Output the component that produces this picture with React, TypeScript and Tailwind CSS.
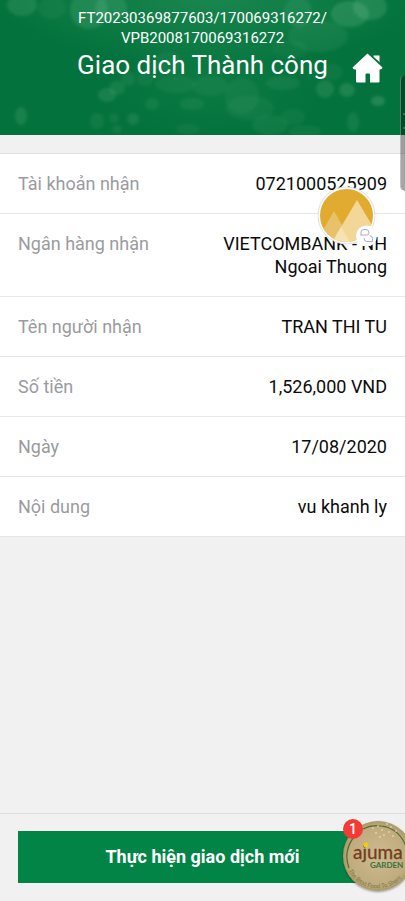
const details = [
  { label: 'Tài khoản nhận', value: '0721000525909' },
  { label: 'Ngân hàng nhận', value: 'VIETCOMBANK - NH Ngoai Thuong' },
  { label: 'Tên người nhận', value: 'TRAN THI TU' },
  { label: 'Số tiền', value: '1,526,000 VND' },
  { label: 'Ngày', value: '17/08/2020' },
  { label: 'Nội dung', value: 'vu khanh ly' },
];

// cx, cy, rx, ry, opacity
const bokeh = [
  [22, 5, 15, 11, 0.13],
  [52, 8, 14, 11, 0.06],
  [89, 10, 19, 19, 0.13],
  [111, 8, 16, 13, 0.12],
  [298, 12, 14, 15, 0.09],
  [350, 14, 19, 13, 0.16],
  [370, 7, 17, 13, 0.15],
  [318, 36, 30, 16, 0.07],
  [290, 49, 18, 9, 0.04],
  [168, 63, 14, 11, 0.06],
  [128, 79, 7, 7, 0.08],
  [117, 88, 8, 7, 0.1],
  [107, 95, 9, 7, 0.12],
  [145, 79, 8, 7, 0.06],
  [175, 84, 20, 9, 0.05],
  [210, 86, 18, 10, 0.05],
  [242, 96, 17, 18, 0.06],
  [283, 83, 17, 7, 0.07],
  [325, 89, 9, 9, 0.12],
  [347, 90, 8, 7, 0.15],
  [333, 72, 10, 8, 0.06],
  [378, 101, 7, 5, 0.18],
  [21, 116, 6, 9, 0.13],
  [152, 104, 7, 6, 0.08],
  [192, 104, 12, 6, 0.07],
  [97, 121, 7, 8, 0.08],
  [114, 118, 5, 5, 0.07],
  [117, 129, 5, 4, 0.08],
  [133, 119, 6, 6, 0.11],
  [188, 129, 12, 5, 0.05],
  [270, 125, 18, 10, 0.07],
  [293, 117, 12, 8, 0.05],
  [250, 108, 24, 12, 0.05],
  [305, 131, 16, 6, 0.06],
  [353, 122, 6, 10, 0.09],
];

const flecks = [
  [32, 9], [37, 7], [41, 11], [46, 5], [50, 8], [35, 14], [43, 16], [48, 13], [55, 12], [52, 17], [39, 18], [58, 7],
];

function HeaderPattern() {
  return (
    <svg className="absolute inset-0 size-full" viewBox="0 0 405 135" preserveAspectRatio="none" aria-hidden="true">
      <defs>
        <radialGradient id="glow">
          <stop offset="0" stopColor="#35a267" stopOpacity="0.42" />
          <stop offset="1" stopColor="#35a267" stopOpacity="0" />
        </radialGradient>
        <filter id="soft">
          <feGaussianBlur stdDeviation="1.8" />
        </filter>
      </defs>
      <rect width="405" height="135" fill="#04723c" />
      <ellipse cx="210" cy="0" rx="210" ry="65" fill="url(#glow)" />
      <ellipse cx="215" cy="80" rx="115" ry="60" fill="url(#glow)" opacity="0.4" />
      <g fill="#a9e5bd" filter="url(#soft)">
        {bokeh.map(([cx, cy, rx, ry, opacity]) => (
          <ellipse key={`${cx}-${cy}`} cx={cx} cy={cy} rx={rx} ry={ry} opacity={opacity} />
        ))}
      </g>
    </svg>
  );
}

function HomeIcon() {
  return (
    <svg className="h-[30px] w-[31px]" viewBox="0 0 31 30" fill="#fff" aria-hidden="true">
      <path d="M21.500 2.500H27.500V9.500L21.500 4Z" />
      <path d="M15.500 0.500 30.500 14.500Q30 16.500 28 16.500H27.500V28.500Q27.500 29.500 26.500 29.500H18V21.500Q18 20.500 17 20.500H14.500Q13.500 20.500 13.500 21.500V29.500H5Q4 29.500 4 28.500V16.500H3Q1 16.500 0.500 14.500Z" />
      <path d="M20 3 27.500 9.500" stroke="#04723c" strokeWidth="0.800" />
    </svg>
  );
}

function MountainBubble() {
  return (
    <button type="button" aria-label="Mountain chat" className="absolute top-[186px] right-7 size-[60px]">
      <svg viewBox="0 0 60 60" className="size-full" aria-hidden="true">
        <defs>
          <clipPath id="disc">
            <circle cx="29.500" cy="29.500" r="26.500" />
          </clipPath>
        </defs>
        <circle cx="29.500" cy="29.500" r="28.500" fill="#fff" stroke="#dfdfe3" />
        <circle cx="29.500" cy="29.500" r="26.500" fill="#e1ab30" />
        <g clipPath="url(#disc)">
          <path d="M17 25 37 60H-3Z" fill="#e9c16a" />
          <path d="M40 14 66 58H14Z" fill="#f2d799" />
          <path d="M24 41 34 58H14Z" fill="#f6e2b2" />
        </g>
        <circle cx="49.500" cy="50" r="10.500" fill="#fff" />
        <g fill="none" strokeWidth="1" strokeLinecap="round" strokeLinejoin="round">
          <path d="M44 49V46Q44 43.500 47 43.500H49Q52 43.500 52 47Q52 49 50 49H44" stroke="#b9a5da" />
          <path d="M53 49.500Q55.500 50 55.500 52.500V55.500H50Q47 55.500 47 52.500" stroke="#a5acd9" />
        </g>
      </svg>
    </button>
  );
}

function GardenBubble() {
  return (
    <button type="button" aria-label="Ajuma Garden, 1" className="absolute right-[-10px] bottom-1.5 h-[76px] w-[74px]">
      <svg viewBox="0 0 74 76" className="size-full" aria-hidden="true">
        <defs>
          <radialGradient id="paper">
            <stop offset="0" stopColor="#cdbb90" />
            <stop offset="0.85" stopColor="#bfab7c" />
            <stop offset="1" stopColor="#ab9767" />
          </radialGradient>
          <path id="motto" d="M6 48A32.500 32.500 0 0 0 67 48" />
          <filter id="shade" x="-10%" y="-10%" width="120%" height="120%">
            <feDropShadow dx="0" dy="1" stdDeviation="1" floodOpacity="0.4" />
          </filter>
        </defs>
        <circle cx="37" cy="37" r="35" fill="url(#paper)" filter="url(#shade)" />
        <path d="M8 49A30.500 30.500 0 0 1 14 17M22 10A30.500 30.500 0 0 1 40 7Q60 9 67 33" fill="none" stroke="#516b33" strokeWidth="1.200" />
        <g fill="#f4ecc9">
          {flecks.map(([x, y]) => (
            <circle key={`${x}-${y}`} cx={x} cy={y} r="0.800" />
          ))}
        </g>
        <text x="12" y="40" fontFamily="Lato, sans-serif" fontSize="19" fill="#713d20" stroke="#713d20" strokeWidth="0.300">ajuma</text>
        <circle cx="25" cy="26" r="2.500" fill="#f1cb16" />
        <text x="29" y="49" fontFamily="Lato, sans-serif" fontSize="8" fontWeight="700" fill="#39703d">GARDEN</text>
        <text fontFamily="Lato, sans-serif" fontSize="6" fill="#79794b">
          <textPath href="#motto" startOffset="4">The Best Food To Share</textPath>
        </text>
      </svg>
      <span className="absolute top-0 left-0.5 flex size-5 items-center justify-center rounded-full bg-[#f23b36] text-sm leading-5 font-medium text-white">1</span>
    </button>
  );
}

export default function App() {
  return (
    <div className="relative flex min-h-screen flex-col overflow-hidden bg-[#f1f1f1] font-[Roboto,'Noto_Sans',sans-serif]">
      <header className="relative pt-2 pb-[52px] text-white">
        <HeaderPattern />
        <p className="relative text-center text-[15px] leading-5">
          FT20230369877603/170069316272/
          <br />
          VPB2008170069316272
        </p>
        <div className="relative grid grid-cols-[1fr_auto_1fr] items-center px-[22px]">
          <h1 className="col-start-2 text-[26px] leading-[35px]">Giao dịch Thành công</h1>
          <button type="button" aria-label="Trang chủ" className="justify-self-end pt-1">
            <HomeIcon />
          </button>
        </div>
      </header>

      <main className="flex grow flex-col pt-[18px]">
        <dl className="border-t border-[#e1e1e1] bg-white text-lg leading-[23px]">
          {details.map(({ label, value }) => (
            <div key={label} className="flex justify-between gap-4 border-b border-[#e6e6e6] px-[18px] py-[18px]">
              <dt className="shrink-0 text-[#9b9b9f]">{label}</dt>
              <dd className="max-w-[170px] text-right text-[#0b0b0b]">{value}</dd>
            </div>
          ))}
        </dl>
      </main>

      <footer className="border-t border-[#dedede] px-[18px] pt-[17px] pb-[18px]">
        <button type="button" className="h-[52px] w-full bg-[#028447] text-lg font-bold text-white">
          Thực hiện giao dịch mới
        </button>
      </footer>

      <div className="absolute top-[75px] right-0 h-[116px] w-[5px] rounded-l-md border-l border-white/30 bg-black/35" aria-hidden="true">
        <span className="absolute top-[38px] left-0.5 size-0.5 rounded-full bg-white/30" />
        <span className="absolute top-[52px] left-0.5 size-0.5 rounded-full bg-white/30" />
      </div>
      <MountainBubble />
      <GardenBubble />
    </div>
  );
}
